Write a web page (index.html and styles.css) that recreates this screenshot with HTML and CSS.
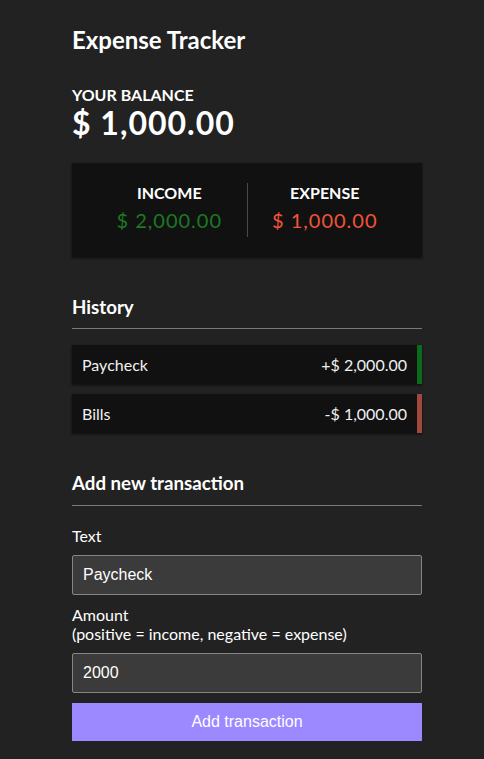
FILE: index.html
```html
<!DOCTYPE html>
<html lang="en">
<head>
<meta charset="UTF-8">
<title>Expense Tracker</title>
<link rel="stylesheet" href="styles.css">
</head>
<body>
  <div class="container">
    <h2 class="title">Expense Tracker</h2>
    <h4 class="label-h">Your Balance</h4>
    <h1 class="balance">$ 1,000.00</h1>

    <div class="inc-exp-container">
      <div class="inc">
        <h4 class="label-h">Income</h4>
        <p class="money plus-money">$ 2,000.00</p>
      </div>
      <div class="exp">
        <h4 class="label-h">Expense</h4>
        <p class="money minus-money">$ 1,000.00</p>
      </div>
    </div>

    <h3 class="section">History</h3>
    <ul class="list">
      <li class="item plus"><span>Paycheck</span><span>+$ 2,000.00</span></li>
      <li class="item minus"><span>Bills</span><span>-$ 1,000.00</span></li>
    </ul>

    <h3 class="section">Add new transaction</h3>
    <form class="form">
      <div class="form-control">
        <label class="field-label" for="text">Text</label>
        <input class="field" type="text" id="text" value="Paycheck">
      </div>
      <div class="form-control">
        <label class="field-label" for="amount">Amount<br>(positive = income, negative = expense)</label>
        <input class="field" type="text" id="amount" value="2000">
      </div>
      <button class="btn" type="button">Add transaction</button>
    </form>
  </div>
</body>
</html>
```
FILE: styles.css
```css
* {
  box-sizing: border-box;
}

body {
  margin: 0;
  padding-left: 10px;
  background-color: #222222;
  color: #ffffff;
  font-family: Lato, "Noto Sans", sans-serif;
}

.container {
  width: 350px;
  margin: 0 auto 30px;
  padding-top: 26px;
}

.title {
  font-size: 24px;
  line-height: 1.2;
  margin: 0 0 30px;
  letter-spacing: 0;
}

.label-h {
  font-size: 16px;
  line-height: 1.2;
  margin: 0;
  text-transform: uppercase;
}

.balance {
  font-size: 32px;
  line-height: 1.2;
  letter-spacing: 1px;
  margin: 0;
}

.inc-exp-container {
  background-color: #111111;
  box-shadow: 0 1px 3px rgba(0, 0, 0, 0.3), 0 1px 2px rgba(0, 0, 0, 0.4);
  padding: 20px;
  display: flex;
  justify-content: space-between;
  margin: 21px 0 20px;
}

.inc-exp-container > div {
  flex: 1;
  text-align: center;
}

.inc {
  border-right: 1px solid #4a4a4a;
}

.money {
  font-size: 20px;
  line-height: 1.2;
  letter-spacing: 1px;
  margin: 5px 0;
}

.plus-money {
  color: #1b7a22;
}

.minus-money {
  color: #f2533b;
}

.section {
  font-size: 18.72px;
  line-height: 1.2;
  border-bottom: 1px solid #7a7a7a;
  padding-bottom: 10px;
  margin: 39px 0 10px;
}

.list {
  list-style-type: none;
  padding: 0;
  margin: 16px 0 39px;
}

.item {
  background-color: #111111;
  box-shadow: 0 1px 3px rgba(0, 0, 0, 0.3), 0 1px 2px rgba(0, 0, 0, 0.4);
  color: #f0f0f0;
  display: flex;
  justify-content: space-between;
  padding: 10px;
  margin: 10px 0;
  font-size: 16px;
  line-height: 1.2;
}

.item.plus {
  border-right: 5px solid #0a6b1e;
}

.item.minus {
  border-right: 5px solid #a0483c;
}

.form {
  margin: 0;
}

.field-label {
  display: inline-block;
  margin: 10px 0;
  font-size: 16px;
  line-height: 1.2;
  color: #ffffff;
}

.field {
  display: block;
  width: 100%;
  font-family: "Liberation Sans", Arial, sans-serif;
  font-size: 16px;
  padding: 10px;
  border: 1px solid #858585;
  border-radius: 2px;
  background-color: #3b3b3b;
  color: #ffffff;
  outline: none;
}

.btn {
  display: block;
  width: 100%;
  background-color: #9c88ff;
  color: #ffffff;
  border: 0;
  font-family: "Liberation Sans", Arial, sans-serif;
  font-size: 16px;
  padding: 10px;
  margin: 10px 0 30px;
  cursor: pointer;
}
```
